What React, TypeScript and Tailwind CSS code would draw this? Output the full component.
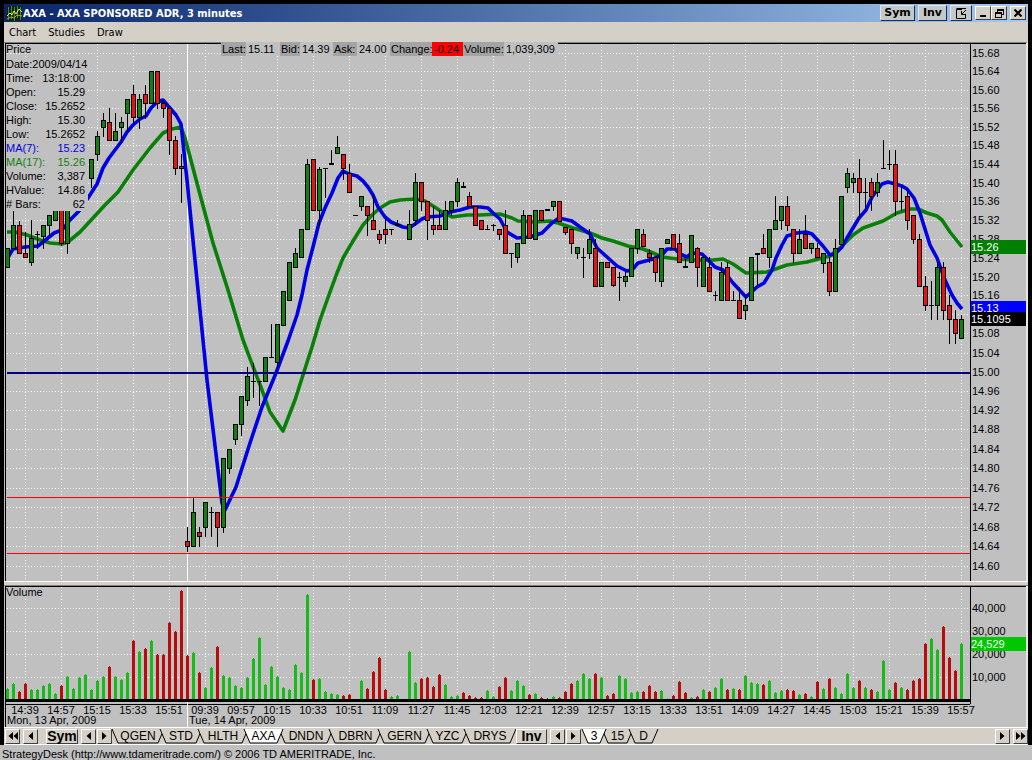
import clsx from 'clsx'

type Candle = [kind: string, high: number, top: number, bottom: number, low: number]

// kind: g = up, r = down, d = thin doji, t = thick doji, n = no trade
const candles: Candle[] = [
  ['g', 248, 248, 267, 267], ['g', 211, 225, 248, 248], ['r', 221, 225, 253, 253], ['r', 232, 253, 257, 257],
  ['g', 220, 238, 262, 265], ['d', 231, 234, 234, 248], ['g', 225, 225, 236, 248], ['g', 215, 215, 225, 235],
  ['g', 205, 205, 220, 220], ['r', 205, 205, 243, 245], ['g', 205, 205, 243, 253], ['n', 0, 0, 0, 0],
  ['n', 0, 0, 0, 0], ['n', 0, 0, 0, 0], ['g', 159, 159, 178, 187], ['g', 131, 136, 154, 160],
  ['g', 113, 120, 127, 136], ['r', 108, 122, 140, 140], ['g', 113, 131, 140, 140], ['g', 117, 122, 127, 142],
  ['g', 99, 99, 113, 130], ['r', 85, 94, 117, 122], ['g', 94, 99, 117, 128], ['r', 85, 94, 103, 118],
  ['g', 71, 71, 103, 103], ['r', 71, 71, 103, 108], ['r', 100, 103, 108, 117], ['r', 108, 108, 140, 154],
  ['r', 136, 140, 168, 174], ['r', 154, 166, 168, 202], ['r', 527, 541, 546, 551], ['g', 498, 512, 546, 546],
  ['r', 527, 532, 536, 546], ['g', 502, 502, 527, 536], ['d', 507, 512, 512, 536], ['r', 512, 512, 527, 546],
  ['g', 458, 458, 527, 532], ['g', 449, 449, 468, 473], ['g', 424, 424, 439, 444], ['g', 396, 396, 424, 435],
  ['g', 367, 376, 400, 405], ['d', 363, 381, 381, 397], ['d', 381, 381, 381, 405], ['g', 357, 357, 381, 381],
  ['d', 324, 357, 357, 357], ['g', 324, 324, 362, 366], ['g', 291, 291, 325, 325], ['g', 262, 262, 300, 300],
  ['g', 248, 253, 267, 267], ['g', 229, 229, 257, 257], ['g', 159, 164, 229, 229], ['r', 159, 159, 210, 210],
  ['g', 167, 169, 210, 225], ['d', 168, 168, 168, 197], ['t', 150, 163, 163, 163], ['g', 136, 147, 153, 153],
  ['r', 154, 154, 168, 179], ['r', 164, 173, 192, 192], ['d', 215, 215, 215, 215], ['g', 196, 196, 206, 210],
  ['r', 206, 206, 215, 235], ['r', 195, 220, 229, 229], ['r', 230, 234, 239, 243], ['r', 219, 229, 234, 243],
  ['d', 229, 229, 229, 234], ['t', 220, 224, 224, 225], ['n', 0, 0, 0, 0], ['g', 210, 224, 239, 239],
  ['g', 173, 182, 220, 225], ['r', 182, 182, 201, 210], ['r', 201, 201, 220, 239], ['r', 206, 225, 229, 234],
  ['r', 210, 225, 229, 229], ['g', 201, 210, 229, 229], ['g', 201, 201, 210, 215], ['g', 178, 182, 201, 206],
  ['t', 182, 186, 186, 186], ['r', 192, 196, 206, 206], ['r', 206, 206, 225, 225], ['r', 220, 220, 229, 229],
  ['d', 225, 229, 229, 229], ['d', 224, 225, 225, 230], ['r', 229, 229, 234, 239], ['r', 210, 225, 253, 253],
  ['d', 253, 253, 253, 267], ['g', 243, 243, 257, 262], ['g', 210, 215, 243, 243], ['r', 215, 215, 238, 238],
  ['g', 210, 210, 239, 239], ['r', 210, 210, 220, 220], ['t', 209, 209, 209, 210], ['g', 201, 201, 206, 210],
  ['r', 201, 201, 221, 221], ['r', 227, 227, 232, 234], ['r', 229, 229, 243, 253], ['g', 247, 247, 253, 258],
  ['d', 248, 257, 257, 277], ['g', 229, 239, 253, 258], ['r', 239, 248, 286, 286], ['g', 262, 262, 286, 286],
  ['r', 262, 262, 267, 267], ['r', 267, 267, 285, 286], ['d', 272, 277, 277, 300], ['g', 272, 276, 281, 286],
  ['g', 248, 248, 276, 276], ['g', 229, 229, 248, 253], ['r', 229, 234, 246, 246], ['r', 249, 253, 257, 262],
  ['r', 257, 257, 272, 281], ['g', 248, 248, 281, 286], ['g', 239, 239, 243, 243], ['r', 234, 234, 248, 248],
  ['r', 234, 243, 262, 262], ['t', 259, 266, 266, 267], ['g', 235, 235, 262, 262], ['r', 247, 248, 267, 286],
  ['g', 257, 257, 286, 286], ['r', 257, 267, 291, 291], ['d', 291, 295, 295, 300], ['g', 262, 272, 300, 300],
  ['r', 262, 267, 300, 300], ['d', 291, 300, 300, 300], ['r', 287, 300, 318, 318], ['g', 296, 305, 310, 319],
  ['g', 257, 257, 300, 300], ['t', 253, 253, 253, 286], ['r', 234, 248, 253, 253], ['g', 229, 229, 257, 267],
  ['g', 196, 220, 229, 229], ['g', 206, 206, 220, 229], ['r', 196, 206, 225, 230], ['r', 229, 229, 253, 262],
  ['g', 229, 239, 253, 253], ['r', 215, 234, 248, 248], ['g', 243, 243, 248, 253], ['r', 243, 248, 257, 257],
  ['g', 253, 253, 263, 272], ['r', 257, 262, 291, 295], ['g', 239, 248, 291, 291], ['g', 196, 196, 244, 244],
  ['g', 168, 173, 187, 192], ['g', 173, 178, 182, 192], ['r', 159, 178, 192, 219], ['d', 178, 192, 192, 209],
  ['r', 178, 182, 196, 210], ['g', 173, 182, 192, 196], ['d', 140, 168, 168, 168], ['d', 150, 164, 164, 169],
  ['r', 150, 164, 201, 215], ['d', 187, 201, 201, 210], ['r', 192, 196, 220, 229], ['r', 215, 215, 239, 243],
  ['r', 234, 239, 286, 286], ['r', 276, 286, 305, 310], ['d', 281, 305, 305, 319], ['g', 262, 267, 305, 319],
  ['r', 262, 267, 310, 319], ['r', 295, 305, 319, 343], ['r', 310, 319, 333, 343], ['g', 315, 319, 338, 338],
]

const volumes =
  'g11 g16 r8 r16 g10 g10 g14 g16 g6 r14 g23 g11 g22 g25 g10 g19 g23 r33 g23 g20 g27 r59 g48 r51 g59 r45 r45 r77 r68 r109 ' +
  'r44 g47 r27 g12 g32 r53 g24 g22 g14 g12 g22 g41 g62 g15 g33 g23 g12 g10 g35 g27 g105 r20 g21 g8 g6 g5 r4 r5 g0 g19 ' +
  'r11 r28 r42 r10 g3 g4 g0 g48 g17 r21 r22 r13 r25 g15 g3 g4 r7 r4 r2 r2 g9 g3 r13 r22 g9 g19 g14 r5 g6 r2 ' +
  'r1 g3 r2 r8 r16 g19 g26 g21 r26 g22 r4 r6 g24 g21 g7 g8 r8 r14 r8 g9 g1 r4 r18 r7 g2 r3 g10 r8 g12 g21 ' +
  'r10 g11 r10 g24 g17 g16 r15 g19 g7 g9 r10 r9 g5 r6 g3 r18 g11 r21 g12 g6 g26 g12 r19 g12 r10 g8 g39 g10 r17 g12 ' +
  'r10 r19 r21 r56 g61 g50 r73 r42 r29 g56'

const ma7 =
  '7,259 13,249 25,247 38,246 48,238 54,233 62,230 70,220 79,211 88,198 97,184 103,168 109,158 115,150 121,142 127,132 133,125 140,119 146,116 151,108 157,102 163,100 169,107 176,115 181,124 187,180 198,290 203,340 207,380 222,503 225,510 236,487 250,443 262,407 276,373 288,341 297,315 302,295 307,270 313,247 319,223 325,208 332,193 338,178 343,171 349,174 357,176 363,181 368,187 373,195 378,207 385,217 391,222 403,227 409,228 415,224 422,219 427,217 440,216 450,212 460,210 470,207 480,207 488,208 493,213 500,219 507,232 517,238 530,237 542,233 552,223 559,218 572,221 580,227 590,234 597,248 607,257 617,266 627,271 632,270 638,263 653,259 662,255 667,249 675,249 680,254 687,257 692,253 702,254 715,267 723,270 733,283 746,297 757,287 764,283 772,270 776,258 782,245 787,236 797,233 806,232 812,234 823,246 830,255 835,254 842,247 847,238 859,218 866,210 872,197 882,184 888,182 902,186 907,189 914,198 920,213 930,245 937,258 945,280 952,295 957,303 962,309'

const ma17 =
  '7,232 15,232 27,235 40,240 50,243 62,244 68,242 80,232 93,218 105,205 118,192 133,170 150,148 163,133 172,129 181,127 185,138 198,187 213,243 228,290 243,340 262,390 270,412 283,431 295,400 303,375 312,347 320,320 330,292 337,273 343,258 353,241 363,225 372,215 380,208 390,202 400,200 415,199 425,201 433,206 442,212 452,217 467,215 480,215 500,214 512,218 518,221 535,222 550,221 558,223 573,228 590,233 602,238 613,241 628,246 643,249 653,253 662,257 677,259 693,260 713,260 723,259 733,264 746,273 767,272 787,265 807,262 830,256 840,248 853,235 863,228 883,221 897,213 910,209 918,209 927,213 937,216 942,220 950,232 962,247'

const prices = Array.from({ length: 28 }, (_, i) => (15.68 - i * 0.04).toFixed(2))
// log scale
const priceY = (p: string) => Math.round(53 + 7189 * Math.log(15.68 / Number(p)))
const barX = (i: number) => 7 + i * 6

const times = [
  '14:39', '14:57', '15:15', '15:33', '15:51', '09:39', '09:57', '10:15', '10:33', '10:51', '11:09', '11:27', '11:45', '12:03',
  '12:21', '12:39', '12:57', '13:15', '13:33', '13:51', '14:09', '14:27', '14:45', '15:03', '15:21', '15:39', '15:57',
]

const info = [
  ['Date:', '2009/04/14'],
  ['Time:', '13:18:00'],
  ['Open:', '15.29'],
  ['Close:', '15.2652'],
  ['High:', '15.30'],
  ['Low:', '15.2652'],
  ['MA(7):', '15.23', 'text-[#0000e0]'],
  ['MA(17):', '15.26', 'text-[#108010]'],
  ['Volume:', '3,387'],
  ['HValue:', '14.86'],
  ['# Bars:', '62'],
]

const symbolTabs = [
  { name: 'QGEN', w: 48 },
  { name: 'STD', w: 38 },
  { name: 'HLTH', w: 46 },
  { name: 'AXA', w: 35, active: true },
  { name: 'DNDN', w: 50 },
  { name: 'DBRN', w: 49 },
  { name: 'GERN', w: 49 },
  { name: 'YZC', w: 37 },
  { name: 'DRYS', w: 48 },
]

const intervalTabs = [
  { name: '3', w: 20, active: true },
  { name: '15', w: 27 },
  { name: 'D', w: 25 },
]

const raised = 'shrink-0 flex items-center justify-center bg-[#d4d0c8] border border-t-white border-l-white border-r-[#404040] border-b-[#404040]'
const titleButton = 'shrink-0 h-4 flex items-center justify-center bg-[#c4c8c8] border border-t-[#dfe6ee] border-l-[#dfe6ee] border-r-[#1c3050] border-b-[#1c3050]'

function Arrow({ left, double }: { left?: boolean; double?: boolean }) {
  return (
    <svg width={double ? 10 : 5} height="8" viewBox={double ? '0 0 10 8' : '0 0 5 8'} className={clsx(left && 'rotate-180')}>
      <path d="M0 0L4.5 4L0 8Z" />
      {double && <path d="M5 0L9.5 4L5 8Z" />}
    </svg>
  )
}

function ArrowButton({ label, left, double }: { label: string; left?: boolean; double?: boolean }) {
  return (
    <button aria-label={label} className={clsx(raised, 'h-[15px] w-[15px]')}>
      <Arrow left={left} double={double} />
    </button>
  )
}

function Tab({ name, w, active }: { name: string; w: number; active?: boolean }) {
  return (
    <button className={clsx('relative h-[15px] shrink-0', active && 'z-10')} style={{ width: w }}>
      <svg viewBox={`0 0 ${w} 15`} className="absolute inset-0 h-full w-full overflow-visible">
        <path d={`M-2 0L4 14H${w - 4}L${w + 2} 0`} fill={active ? '#fff' : '#d4d0c8'} stroke="#000" />
      </svg>
      <span className="relative block text-center text-[12px] leading-[14px]">{name}</span>
    </button>
  )
}

function PriceChart() {
  return (
    <svg viewBox="6 44 964 537" preserveAspectRatio="none" className="block h-[537px] min-w-0 flex-1" shapeRendering="crispEdges">
      <g stroke="#fff" strokeDasharray="1 2">
        {prices.map(p => <path key={p} d={`M7 ${priceY(p) + 0.5}H970`} />)}
        {times.map((_, i) => <path key={i} d={`M${25.5 + i * 36} 44V581`} />)}
      </g>
      <path d="M187.5 44V581" stroke="#fff" />
      <g fill="none" strokeWidth="3.6" strokeLinejoin="round" shapeRendering="geometricPrecision">
        <polyline points={ma17} stroke="#088008" />
        <polyline points={ma7} stroke="#0000e4" />
      </g>
      {candles.map(([kind, high, top, bottom, low], i) => {
        if (kind === 'n') return null
        const x = barX(i)
        return (
          <g key={i}>
            <path d={`M${x + 0.5} ${high}V${low + 1}`} stroke="#000" />
            {kind === 'd' || kind === 't' ? (
              <rect x={x - 2} y={top} width="5" height={kind === 't' ? 2 : 1} />
            ) : (
              <rect x={x - 1.5} y={top + 0.5} width="4" height={bottom - top} stroke="#000" fill={kind === 'g' ? '#108010' : '#e81414'} />
            )}
          </g>
        )
      })}
      <rect x="7" y="372" width="963" height="2" fill="#000080" />
      <rect x="7" y="497" width="963" height="1" fill="#ff0000" />
      <rect x="7" y="553" width="963" height="1" fill="#ff0000" />
    </svg>
  )
}

function VolumeChart() {
  return (
    <svg viewBox="6 587 964 117" preserveAspectRatio="none" className="block h-[117px] min-w-0 flex-1" shapeRendering="crispEdges">
      <g stroke="#fff" strokeDasharray="1 2">
        {[608, 631, 654, 677].map(y => <path key={y} d={`M7 ${y + 0.5}H970`} />)}
        {times.map((_, i) => <path key={i} d={`M${25.5 + i * 36} 587V699`} />)}
      </g>
      <path d="M187.5 587V704" stroke="#fff" />
      {volumes.split(' ').map((v, i) => {
        const h = Number(v.slice(1))
        const x = barX(i)
        if (!h) return null
        return <path key={i} d={`M${x - 1} 699V${700 - h}h1v-1h1v1h1V699Z`} fill={v[0] === 'g' ? '#18bc18' : '#b80c0c'} />
      })}
      <path d="M6 700.5H970" stroke="#000" strokeWidth="3" />
    </svg>
  )
}

function QuoteBar() {
  const label = 'bg-[#a4a4a4] px-px'
  return (
    <div className="absolute -top-px left-[217px] flex h-3.5 bg-[#c0c0c0] leading-[14px] whitespace-nowrap">
      <span className={clsx(label, 'w-[25px]')}>Last:</span>
      <span className="w-[34px] pl-0.5">15.11</span>
      <span className={clsx(label, 'w-5')}>Bid:</span>
      <span className="w-[33px] pl-0.5">14.39</span>
      <span className={clsx(label, 'w-6')}>Ask:</span>
      <span className="w-[33px] pl-0.5">24.00</span>
      <span className={clsx(label, 'w-[42px]')}>Change:</span>
      <span className="w-[31px] bg-[#ff0000] pl-0.5">-0.24</span>
      <span className={clsx(label, 'w-[41px]')}>Volume:</span>
      <span className="w-[54px] pl-0.5">1,039,309</span>
    </div>
  )
}

export default function App() {
  return (
    <div className="min-h-screen bg-[#c0c0c0] font-['Liberation_Sans',Arial,sans-serif] text-[11px] leading-[14px] text-black">
      <div className="bg-black px-1 pt-1">
        <header className="flex h-[18px] items-center bg-linear-to-r from-[#0a246a] to-[#a6caf0] pr-0.5 pl-[3px]">
          <svg width="15" height="15" viewBox="0 0 15 15" className="mr-px">
            <rect width="15" height="15" fill="#10240c" />
            <path d="M1.5 1V14M4.5 0V13M7.5 1V15M10.5 0V12M13.5 1V14" stroke="#3c8c50" />
            <path d="M0 10L3 7L5 9L7 5L9 8L12 3L15 6" stroke="#f0f040" fill="none" />
            <path d="M0 13L4 11L7 12L10 9L15 10" stroke="#c0a020" fill="none" />
          </svg>
          <h1 className="flex-1 truncate pt-px font-['DejaVu_Sans_Condensed','DejaVu_Sans',sans-serif] text-[11px] font-bold text-white">AXA - AXA SPONSORED ADR, 3 minutes</h1>
          <div className="flex items-center gap-[3px] font-['DejaVu_Sans',sans-serif] font-bold">
            <button className={clsx(titleButton, 'w-[35px]')}>Sym</button>
            <button className={clsx(titleButton, 'w-[29px]')}>Inv</button>
            <button aria-label="Detach" className={clsx(titleButton, 'w-[22px]')}>
              <svg width="11" height="11" viewBox="0 0 11 11" fill="none" stroke="#000">
                <path d="M6 1.5H.5V10.5H9.5V6M.5 .5H10" />
                <path d="M10 2L6 6M5.5 3V6.5H9" />
              </svg>
            </button>
            <div className="flex">
              <button aria-label="Minimize" className={clsx(raised, 'h-3.5 w-4')}>
                <svg width="8" height="8"><path d="M1 6h6v2H1z" /></svg>
              </button>
              <button aria-label="Restore" className={clsx(raised, 'h-3.5 w-4')}>
                <svg width="9" height="9" viewBox="0 0 9 9" fill="none" stroke="#000" shapeRendering="crispEdges">
                  <path d="M2.5 3V.5H8.5V5.5H6M2 1.5H9M.5 3.5H6V8.5H.5ZM0 4.5H6" />
                </svg>
              </button>
            </div>
            <button aria-label="Close" className={clsx(raised, 'h-3.5 w-4')}>
              <svg width="8" height="8" viewBox="0 0 8 8"><path d="M.5 .5L7.5 7.5M7.5 .5L.5 7.5" stroke="#000" strokeWidth="2" /></svg>
            </button>
          </div>
        </header>

        <nav className="flex h-5 items-center gap-3 bg-[#d4d0c8] px-[5px] pt-0.5 font-['DejaVu_Sans_Condensed','DejaVu_Sans',sans-serif]">
          <button>Chart</button>
          <button>Studies</button>
          <button>Draw</button>
        </nav>

        <main className="bg-[#c0c0c0]">
          <section className="relative border-t border-r-2 border-t-[#808080] border-r-[#e8e8e8] pl-px">
            <div className="flex border-t border-l border-black">
              <PriceChart />
              <svg viewBox="971 44 55 537" className="h-[537px] w-[56px] shrink-0 border-l border-black">
                {prices.map(p => <text key={p} x="972" y={priceY(p) + 4}>{p}</text>)}
                <rect x="971" y="240" width="55" height="14" fill="#008000" />
                <rect x="971" y="301" width="55" height="12" fill="#0000ff" />
                <rect x="971" y="312" width="55" height="14" />
                <g fill="#fff">
                  <text x="971" y="251">15.26</text>
                  <text x="971" y="312">15.13</text>
                  <text x="971" y="323">15.1095</text>
                </g>
              </svg>
            </div>
            <div className="absolute top-px left-0.5">
              <h2 className="h-[13px] leading-[11px]">Price</h2>
              <dl className="w-[82px] bg-[#c0c0c0]">
                {info.map(([label, value, color]) => (
                  <div key={label} className={clsx('flex h-3.5 justify-between pr-[3px]', color)}>
                    <dt>{label}</dt>
                    <dd>{value}</dd>
                  </div>
                ))}
              </dl>
            </div>
            <QuoteBar />
          </section>

          <div className="h-[5px] border-t border-b border-t-white border-b-[#808080] bg-[#d4d0c8]" />

          <section className="relative border-r-2 border-[#e8e8e8] pl-px">
            <div className="flex border-t border-l border-black">
              <VolumeChart />
              <svg viewBox="971 587 55 117" className="h-[117px] w-[56px] shrink-0 border-l border-black">
                <text x="972" y="612">40,000</text>
                <text x="972" y="635">30,000</text>
                <text x="972" y="658">20,000</text>
                <text x="972" y="681">10,000</text>
                <rect x="971" y="637" width="55" height="14" fill="#00c800" />
                <text x="971" y="648" fill="#fff">24,529</text>
              </svg>
            </div>
            <h2 className="absolute top-px left-0.5 leading-[11px]">Volume</h2>
            <div className="relative h-[23px] border-l border-black">
              <div className="mr-[56px] border-t border-black" />
              <div className="flex h-2.5 pl-px leading-[10px]">
                {times.map(t => <span key={t} className="w-9 shrink-0 text-center">{t}</span>)}
              </div>
              <div className="flex leading-[10px]">
                <span className="w-[182px] pl-px">Mon, 13 Apr, 2009</span>
                <span className="pl-px">Tue, 14 Apr, 2009</span>
              </div>
              <div className="absolute top-0 left-[181px] h-full border-l border-white" />
            </div>
          </section>

          <footer className="flex h-[18px] items-center border-t border-b border-white bg-[#d4d0c8]">
            <div className="flex gap-[3px] pl-px">
              <ArrowButton label="First" left double />
              <ArrowButton label="Previous" left />
            </div>
            <button className={clsx(raised, 'ml-2 h-[15px] w-8 text-[14px] font-bold')}>Sym</button>
            <div className="mr-0.5 ml-[3px] flex gap-px">
              <ArrowButton label="Scroll symbols left" left />
              <ArrowButton label="Scroll symbols right" />
            </div>
            <div className="flex">
              {symbolTabs.map(t => <Tab key={t.name} {...t} />)}
            </div>
            <button className={clsx(raised, 'relative z-10 ml-0.5 h-[15px] w-[31px] text-[14px] font-bold')}>Inv</button>
            <div className="mr-[3px] ml-[3px] flex gap-px">
              <ArrowButton label="Scroll intervals left" left />
              <ArrowButton label="Scroll intervals right" />
            </div>
            <div className="flex">
              {intervalTabs.map(t => <Tab key={t.name} {...t} />)}
            </div>
            <div className="ml-auto flex gap-[3px]">
              <ArrowButton label="Next" />
              <ArrowButton label="Last" double />
            </div>
          </footer>
        </main>
      </div>
      <p className="pt-0.5 pl-0.5">StrategyDesk (http://www.tdameritrade.com/) © 2006 TD AMERITRADE, Inc.</p>
    </div>
  )
}
